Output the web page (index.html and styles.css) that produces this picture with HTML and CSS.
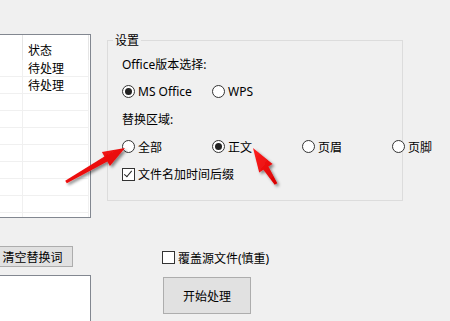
FILE: index.html
```html
<!DOCTYPE html>
<html lang="zh-CN">
<head>
<meta charset="utf-8">
<link rel="stylesheet" href="styles.css">
</head>
<body>
<div class="page">
  <div class="left">
    <div class="list">
      <div class="list-head">
        <div class="cell c1"></div>
        <div class="cell c2">状态</div>
      </div>
      <div class="row"><div class="cell c1"></div><div class="cell c2">待处理</div></div>
      <div class="row"><div class="cell c1"></div><div class="cell c2">待处理</div></div>
      <div class="row"><div class="cell c1"></div><div class="cell c2"></div></div>
      <div class="row"><div class="cell c1"></div><div class="cell c2"></div></div>
      <div class="row"><div class="cell c1"></div><div class="cell c2"></div></div>
      <div class="row"><div class="cell c1"></div><div class="cell c2"></div></div>
      <div class="row"><div class="cell c1"></div><div class="cell c2"></div></div>
      <div class="row"><div class="cell c1"></div><div class="cell c2"></div></div>
      <div class="row"><div class="cell c1"></div><div class="cell c2"></div></div>
      <div class="row"><div class="cell c1"></div><div class="cell c2"></div></div>
    </div>
    <button class="btn clear-btn">清空替换词</button>
    <div class="memo"></div>
  </div>
  <div class="right">
    <fieldset class="group">
      <legend class="group-title">设置</legend>
      <div class="g-row">Office版本选择:</div>
      <div class="g-row opts">
        <label class="opt"><span class="radio on"></span>MS Office</label>
        <label class="opt"><span class="radio"></span>WPS</label>
      </div>
      <div class="g-row">替换区域:</div>
      <div class="g-row opts">
        <label class="opt"><span class="radio"></span>全部</label>
        <label class="opt"><span class="radio on"></span>正文</label>
        <label class="opt"><span class="radio"></span>页眉</label>
        <label class="opt"><span class="radio"></span>页脚</label>
      </div>
      <div class="g-row">
        <label class="opt"><span class="check on"></span>文件名加时间后缀</label>
      </div>
    </fieldset>
    <label class="opt overwrite"><span class="check"></span>覆盖源文件(慎重)</label>
    <button class="btn start-btn">开始处理</button>
  </div>
</div>
<svg class="arrows" width="450" height="321" viewBox="0 0 450 321">
  <defs>
    <filter id="sh" x="-30%" y="-30%" width="160%" height="160%">
      <feDropShadow dx="2" dy="2" stdDeviation="1.5" flood-color="#000" flood-opacity="0.45"/>
    </filter>
    <linearGradient id="rg" x1="0" y1="0" x2="1" y2="1">
      <stop offset="0" stop-color="#ff2020"/>
      <stop offset="1" stop-color="#d80000"/>
    </linearGradient>
  </defs>
  <polygon filter="url(#sh)" fill="url(#rg)" points="66.8,183.3 107.4,161.6 109.9,165.9 125,148 101.9,152.1 104.4,156.4 65.2,180.7"/>
  <polygon filter="url(#sh)" fill="url(#rg)" points="277.3,183.2 268.4,166.6 272.6,163.9 253,148 259.2,172.5 263.4,169.8 274.7,184.8"/>
</svg>
</body>
</html>
```
FILE: styles.css
```css
html, body {
  margin: 0;
  padding: 0;
}
body {
  width: 450px;
  height: 321px;
  overflow: hidden;
  background: #f0f0f0;
  position: relative;
  font-family: "Noto Sans", "Noto Sans CJK SC", sans-serif;
  font-size: 12px;
  color: #000;
}
.page {
  display: flex;
  gap: 16px;
  margin-left: -60px;
}
.left {
  width: 151px;
  padding-top: 34px;
  display: flex;
  flex-direction: column;
  flex: none;
}
.list {
  box-sizing: border-box;
  height: 184px;
  border: 1px solid #828790;
  background: #fff;
  overflow: hidden;
  font-family: "Noto Sans CJK SC", sans-serif;
}
.list-head, .row {
  display: flex;
}
.cell {
  box-sizing: border-box;
  border-right: 1px solid #f0f0f0;
}
.c1 { width: 82px; }
.c2 { width: 66px; padding-left: 5px; }
.list-head .cell {
  height: 25px;
  padding-top: 6px;
  line-height: 18px;
  border-right-color: #e5e5e5;
}
.row .cell {
  height: 17px;
  line-height: 16px;
  border-bottom: 1px solid #f0f0f0;
}
.btn {
  box-sizing: border-box;
  margin: 0;
  padding: 0;
  border: 1px solid #adadad;
  background: #e1e1e1;
  font-family: "Noto Sans CJK SC", sans-serif;
  font-size: 12px;
  color: #000;
}
.clear-btn {
  margin-top: 28px;
  margin-left: 52px;
  width: 81px;
  height: 21px;
  line-height: 19px;
}
.memo {
  margin-top: 8px;
  height: 60px;
  border: 1px solid #828790;
  background: #fff;
}
.right {
  width: 296px;
  padding-top: 33px;
  display: flex;
  flex-direction: column;
  flex: none;
}
.group {
  box-sizing: border-box;
  width: 296px;
  min-width: 0;
  margin: 0;
  padding: 3px 0 12px 14px;
  border: 1px solid #dcdcdc;
}
.group-title {
  padding: 0 2px;
  margin-left: -9px;
  line-height: 14px;
  font-family: "Noto Sans CJK SC", sans-serif;
}
.g-row {
  height: 28px;
  display: flex;
  align-items: center;
  white-space: nowrap;
}
.g-row:nth-of-type(2), .g-row:nth-of-type(4) {
  height: 27px;
}
.opts {
  display: grid;
  grid-template-columns: repeat(4, 90px);
  width: 360px;
}
.opt {
  display: flex;
  align-items: center;
  gap: 3px;
  white-space: nowrap;
}
.radio {
  box-sizing: border-box;
  width: 13px;
  height: 13px;
  border: 1px solid #333;
  border-radius: 50%;
  background: #fff;
  position: relative;
  flex: none;
}
.radio.on::after {
  content: "";
  position: absolute;
  left: 2px;
  top: 2px;
  width: 7px;
  height: 7px;
  border-radius: 50%;
  background: #222;
}
.check {
  box-sizing: border-box;
  width: 13px;
  height: 13px;
  border: 1px solid #333;
  background: #fff;
  position: relative;
  flex: none;
}
.check.on::after {
  content: "";
  position: absolute;
  left: 3px;
  top: 0px;
  width: 3px;
  height: 7px;
  border-right: 1.5px solid #222;
  border-bottom: 1.5px solid #222;
  transform: rotate(40deg);
}
.overwrite {
  margin-top: 50px;
  margin-left: 55px;
  height: 13px;
}
.start-btn {
  margin-top: 13px;
  margin-left: 56px;
  width: 88px;
  height: 37px;
}
.arrows {
  position: absolute;
  left: 0;
  top: 0;
  pointer-events: none;
}
```
